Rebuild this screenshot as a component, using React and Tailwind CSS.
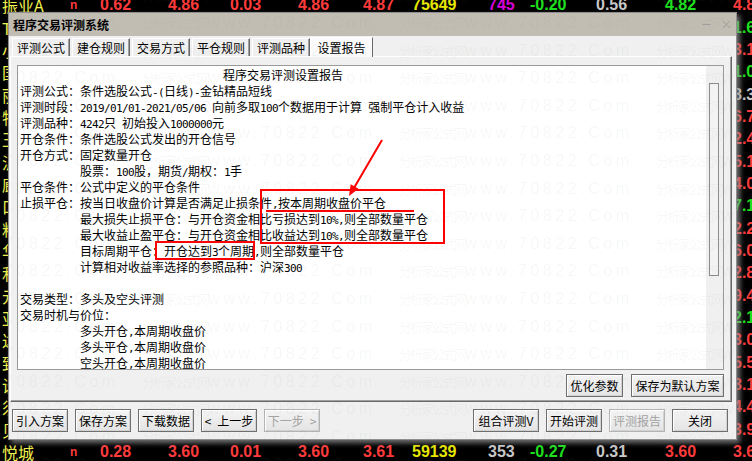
import { Minus, X } from 'lucide-react'

const ui = "font-['Noto_Sans_CJK_SC',sans-serif]"

// ASCII runs get a half-width font so they line up like the original 6px cells
function Rich({ text }) {
  return text
    .split(/([\x20-\x7e]+)/)
    .filter(Boolean)
    .map((part, i) =>
      /^[\x20-\x7e]+$/.test(part) ? (
        <span key={i} className="font-['DejaVu_Sans_Mono',monospace] text-[11px] tracking-[-0.62px] whitespace-pre">
          {part}
        </span>
      ) : (
        <span key={i}>{part}</span>
      )
    )
}

const report = [
  ['程序交易评测设置报告', 'title'],
  ['评测公式：条件选股公式-(日线)-金钻精品短线'],
  ['评测时段：2019/01/01-2021/05/06 向前多取100个数据用于计算 强制平仓计入收益'],
  ['评测品种：4242只 初始投入1000000元'],
  ['开仓条件：条件选股公式发出的开仓信号'],
  ['开仓方式：固定数量开仓'],
  ['股票：100股，期货/期权：1手', 'indent'],
  ['平仓条件：公式中定义的平仓条件'],
  ['止损平仓：按当日收盘价计算是否满足止损条件,按本周期收盘价平仓'],
  ['最大损失止损平仓：与开仓资金相比亏损达到10%,则全部数量平仓', 'indent'],
  ['最大收益止盈平仓：与开仓资金相比收益达到10%,则全部数量平仓', 'indent'],
  ['目标周期平仓：开仓达到3个周期,则全部数量平仓', 'indent'],
  ['计算相对收益率选择的参照品种：沪深300', 'indent'],
  [''],
  ['交易类型：多头及空头评测'],
  ['交易时机与价位：'],
  ['多头开仓,本周期收盘价', 'indent'],
  ['多头平仓,本周期收盘价', 'indent'],
  ['空头开仓,本周期收盘价', 'indent'],
]

const red = 'text-[#ff3b3b]'
const green = 'text-[#1fe01f]'
const yellow = 'text-[#e6e600]'
const gray = 'text-[#c8c8c8]'
const pink = 'text-[#d800d8]'

const cols = [
  'w-[68px]', 'w-[30px]', 'w-[68px]', 'w-[62px]', 'w-[68px]', 'w-[65px]',
  'w-[49px]', 'w-[76px]', 'w-[42px]', 'w-[66px]', 'w-[69px]', 'w-[68px]', 'w-[40px]',
]

const topRow = [
  ['振业A', 'text-[#f2f250]'], ['n', red], ['0.62', red], ['4.86', red], ['0.03', red], ['4.86', red],
  ['4.87', red], ['75649', yellow], ['745', pink], ['-0.20', green], ['0.56', gray], ['4.82', green], ['4.86', red],
]
const bottomRow = [
  ['悦城', 'text-[#f2f250]'], ['n', red], ['0.28', red], ['3.60', red], ['0.01', red], ['3.60', red],
  ['3.61', red], ['59139', yellow], ['353', gray], ['-0.27', green], ['0.31', gray], ['3.60', red], ['3.61', red],
]
const middle = [
  ['TCL科技', '1.62', green], ['小商品城', '3.12', red], ['国新能源', '1.05', green], ['丽江股份', '8.33', gray],
  ['特发信息', '6.70', red], ['王府井', '2.41', red], ['沂普光电', '5.18', red], ['廊坊发展', '4.09', red],
  ['口子窖', '7.16', green], ['粘胶科技', '2.25', red], ['华夏银行', '6.03', red], ['利欧股份', '2.88', red],
  ['元隆雅图', '9.40', red], ['亚泰集团', '2.16', green], ['达安基因', '3.07', red], ['致远新能', '5.51', red],
  ['设计总院', '8.12', red], ['须弥山', '4.46', red], ['贝因美', '3.93', red],
]

function StockRow({ cells }) {
  return (
    <div className="h-[22.35px] flex items-center pl-[2px] whitespace-nowrap">
      {cells.map(([v, c], i) => (
        <div
          key={i}
          className={`${cols[i]} shrink-0 ${c} ${
            i === 0
              ? "font-['Noto_Sans_CJK_SC',sans-serif] text-[16px]"
              : i === 1
              ? "font-['Liberation_Sans',sans-serif] text-[12px] font-bold"
              : "font-['Liberation_Sans_Narrow','Liberation_Sans',sans-serif] text-[16px] font-bold"
          }`}
        >
          {v}
        </div>
      ))}
    </div>
  )
}

function Btn({ w, off, children }) {
  return (
    <div
      className={`${w} h-[23px] shrink-0 flex items-center justify-center border ${
        off ? 'border-[#b4b4b4] text-[#a3a3a3]' : 'border-[#6f6f6f] text-black'
      } bg-linear-to-b from-[#f4f4f4] to-[#e4e4e4] shadow-[inset_1px_1px_0_#ffffff,inset_-1px_-1px_0_#d2d2d2] text-[12px] leading-none`}
    >
      {children}
    </div>
  )
}

function Watermark() {
  const rows = Array.from({ length: 18 })
  return (
    <div className="absolute inset-0 pointer-events-none overflow-hidden z-30">
      <div className="-mt-[18.4px]">
        {rows.map((_, r) => (
          <div key={r} className="h-[27.6px] flex items-center -ml-[115px] whitespace-nowrap text-[rgba(128,128,128,0.07)]">
            {[0, 1, 2, 3].map((k) => (
              <div key={k} className="w-[257px] shrink-0 flex items-baseline">
                <span className="font-['Noto_Sans_CJK_SC',sans-serif] text-[13px] tracking-[-2px]">分析家公式网</span>
                <span className="font-['Liberation_Sans',sans-serif] text-[16px] tracking-[3.6px]">www.70822.Com</span>
              </div>
            ))}
          </div>
        ))}
      </div>
    </div>
  )
}

export default function App() {
  return (
    <div className="relative w-[752px] h-[461px] overflow-hidden bg-black">
      {/* quote board behind the dialog */}
      <div className="-mt-[6px]">
        <StockRow cells={topRow} />
        {middle.map(([n, v, c], i) => (
          <StockRow
            key={i}
            cells={[[n, 'text-[#f2f250]'], ['', red], ['', red], ['', red], ['', red], ['', red], ['', red], ['', red], ['', red], ['', red], ['', red], ['', red], [v, c]]}
          />
        ))}
        <StockRow cells={bottomRow} />
      </div>

      {/* dialog */}
      <div className={`${ui} absolute left-[8px] top-[12px] w-[729px] h-[428px] border border-[#8e8e8e] bg-[#f0f0f0] flex flex-col shadow-[3px_3px_5px_rgba(150,150,150,0.75)] z-10`}>
        <div className="h-[23px] shrink-0 bg-[#c1bdb3] flex items-center pl-[4px] pr-[3px]">
          <span className="text-[12px] font-bold text-black leading-none">程序交易评测系统</span>
          <div className="ml-auto flex items-center gap-[7px] text-[#8d8d8d]">
            <Minus size={13} strokeWidth={1.2} />
            <X size={13} strokeWidth={1.2} />
          </div>
        </div>

        <div className="h-[20px] shrink-0 flex items-end pl-[3px] gap-[2px] text-[12px]">
          {['评测公式', '建仓规则', '交易方式', '平仓规则', '评测品种'].map((t) => (
            <div
              key={t}
              className="w-[58px] h-[18px] flex items-center justify-center border-t border-l border-white border-r border-r-[#696969] shadow-[inset_-1px_0_0_#a0a0a0] leading-none"
            >
              {t}
            </div>
          ))}
          <div className="w-[63px] h-[20px] -ml-[2px] -mb-[1px] relative z-10 bg-[#fbfbfb] flex items-center justify-center border-t border-l border-white border-r border-r-[#696969] leading-none">
            设置报告
          </div>
        </div>

        <div className="ml-[1px] w-[722px] h-[346px] shrink-0 border-t border-l border-white border-r border-b border-r-[#696969] border-b-[#696969] shadow-[inset_-1px_-1px_0_#a0a0a0]">
          <div className="ml-[6px] mt-[8px] w-[707px]">
            <div className="h-[305px] border border-[#9a9a9a] bg-white flex">
              <div className="flex-1 overflow-hidden pl-[2px] pt-[1px] text-[12px] leading-[16px] text-black whitespace-nowrap">
                {report.map(([t, kind], i) => (
                  <div
                    key={i}
                    className={`h-[16px] ${kind === 'title' ? 'pl-[203px]' : kind === 'indent' ? 'pl-[60px]' : ''}`}
                  >
                    <Rich text={t} />
                  </div>
                ))}
              </div>
              <div className="w-[17px] shrink-0 bg-[#f0f0f0] pt-[17px] pl-[3px]">
                <div className="w-[10px] h-[193px] border border-[#8c8c8c] bg-[#f3f3f3]" />
              </div>
            </div>
            <div className="mt-[4px] flex justify-end gap-[8px]">
              <Btn w="w-[57px]">优化参数</Btn>
              <Btn w="w-[93px]">保存为默认方案</Btn>
            </div>
          </div>
        </div>

        <div className="mt-[7px] flex pl-[3px] pr-[8px]">
          <div className="flex gap-[7px]">
            <Btn w="w-[56px]">引入方案</Btn>
            <Btn w="w-[56px]">保存方案</Btn>
            <Btn w="w-[56px]">下载数据</Btn>
            <Btn w="w-[56px]">
              <span className="mr-[6px]">&lt;</span>上一步
            </Btn>
            <Btn w="w-[56px]" off>
              下一步<span className="ml-[6px]">&gt;</span>
            </Btn>
          </div>
          <div className="ml-auto flex gap-[7px]">
            <Btn w="w-[66px]">组合评测V</Btn>
            <Btn w="w-[56px]">开始评测</Btn>
            <Btn w="w-[56px]" off>评测报告</Btn>
            <Btn w="w-[56px]">关闭</Btn>
          </div>
        </div>
      </div>

      {/* red annotations */}
      <svg className="absolute left-0 top-0 pointer-events-none z-20" width="752" height="461">
        <rect x="261" y="190" width="183" height="53" fill="none" stroke="#ff0000" strokeWidth="2" />
        <line x1="266" y1="211" x2="414" y2="211" stroke="#ff0000" strokeWidth="2" />
        <rect x="156" y="242" width="98" height="17" fill="none" stroke="#ff0000" strokeWidth="2" />
        <line x1="382" y1="140" x2="354" y2="188" stroke="#ff0000" strokeWidth="2" />
        <polygon points="349,196 358.5,188.8 350.7,184.2" fill="#ff0000" />
      </svg>

      <Watermark />
    </div>
  )
}
